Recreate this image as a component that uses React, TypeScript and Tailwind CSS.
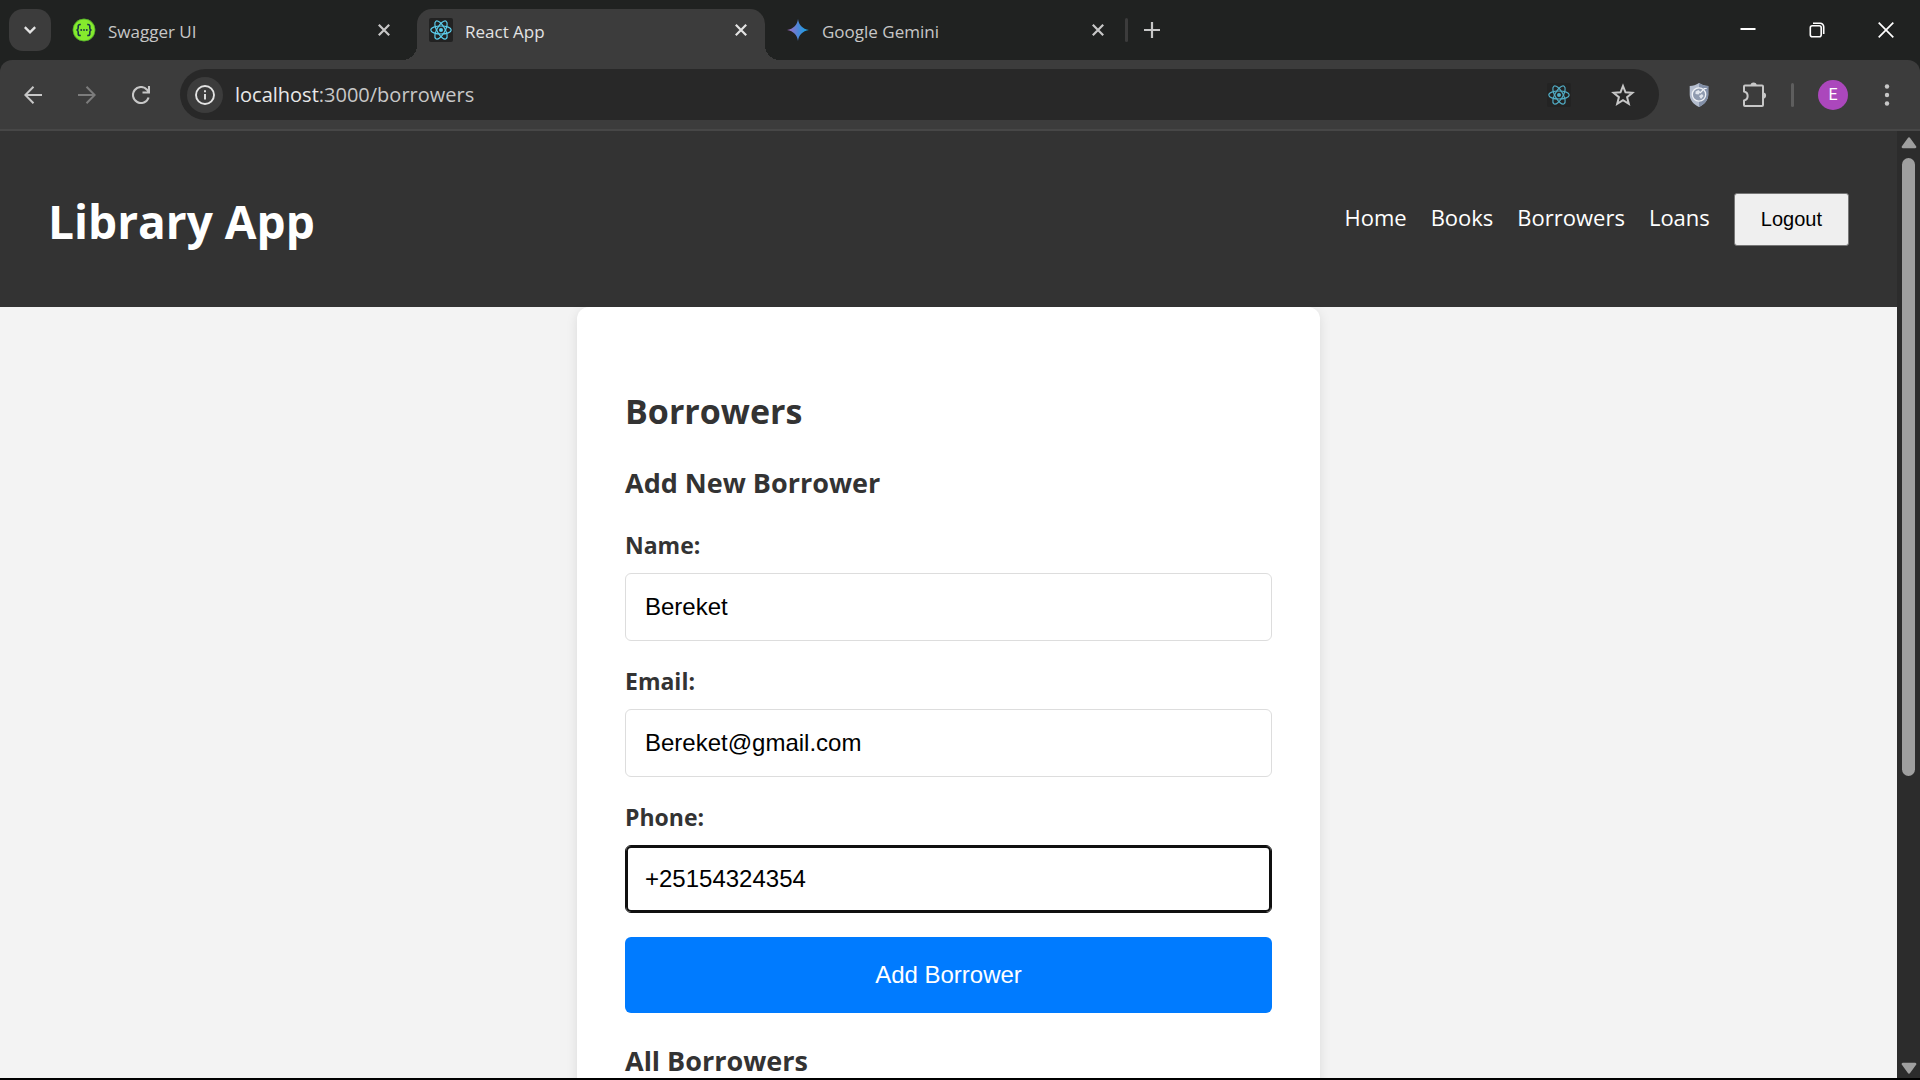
import { useState } from "react";
import type { ReactNode } from "react";

const UI = "font-['Segoe_UI','Open_Sans',sans-serif]";
const ARIAL = "font-['Liberation_Sans',Arial,sans-serif]";

function ReactLogo({ className }: { className: string }) {
  return (
    <svg className={className} viewBox="0 0 24 24" fill="none" aria-hidden="true">
      <rect width="24" height="24" rx="2" fill="#222222" />
      <g stroke="#5ccfee" strokeWidth="1.2">
        <ellipse cx="12" cy="12" rx="10.2" ry="4" />
        <ellipse cx="12" cy="12" rx="10.2" ry="4" transform="rotate(60 12 12)" />
        <ellipse cx="12" cy="12" rx="10.2" ry="4" transform="rotate(120 12 12)" />
      </g>
      <circle cx="12" cy="12" r="2" fill="#5ccfee" />
    </svg>
  );
}

function SwaggerLogo() {
  return (
    <svg className="size-6" viewBox="0 0 24 24" fill="none" aria-hidden="true">
      <circle cx="12" cy="12" r="11.2" fill="#85ea2d" />
      <circle cx="12" cy="12" r="11" stroke="#3d8f2c" strokeWidth="0.6" />
      <path
        d="M8.8 6.5H8c-1.3 0-1.8.7-1.8 1.8v1.6c0 1.3-.5 2-1.7 2.1 1.2.1 1.7.8 1.7 2.1v1.6c0 1.1.5 1.8 1.8 1.8h.8M15.200 6.500h.8c1.300 0 1.800.7 1.800 1.800v1.600c0 1.300.5 2 1.700 2.100-1.200.1-1.700.8-1.700 2.100v1.600c0 1.100-.5 1.800-1.800 1.800h-.8"
        stroke="#173647"
        strokeWidth="1.6"
      />
      <g fill="#173647">
        <circle cx="9.2" cy="12" r="0.9" />
        <circle cx="12" cy="12" r="0.9" />
        <circle cx="14.8" cy="12" r="0.9" />
      </g>
    </svg>
  );
}

function GeminiLogo() {
  return (
    <svg className="size-6" viewBox="0 0 24 24" aria-hidden="true">
      <defs>
        <linearGradient id="gemini" x1="0" y1="0" x2="1" y2="0">
          <stop offset="0.1" stopColor="#9a6fc4" />
          <stop offset="0.5" stopColor="#4d86d8" />
          <stop offset="0.9" stopColor="#1ba1e3" />
        </linearGradient>
      </defs>
      <path
        d="M12 1c.6 5.500 4.500 10.200 11 11-6.500.8-10.400 5.500-11 11-.6-5.500-4.500-10.200-11-11C7.500 11.200 11.400 6.500 12 1z"
        fill="url(#gemini)"
      />
    </svg>
  );
}

function CloseGlyph() {
  return (
    <svg className="size-3" viewBox="0 0 12 12" stroke="currentColor" strokeWidth="2.2" aria-hidden="true">
      <path d="M0.8 0.8 11.2 11.2M11.2 0.8 0.8 11.2" />
    </svg>
  );
}

function Tab({ icon, title, active = false }: { icon: ReactNode; title: string; active?: boolean }) {
  return (
    <div
      className={
        active
          ? "relative flex w-[348px] items-center gap-3 rounded-t-[15px] bg-[#3c3c3c] pl-3 pr-[18px] pb-[9px] text-[#e3e3e3]"
          : "flex w-[348px] items-center gap-3 pl-3 pr-[18px] pb-[9px] text-[#c7c7c7]"
      }
    >
      {active && (
        <>
          <span className="absolute bottom-0 -left-[15px] size-[15px] bg-[radial-gradient(circle_at_0_0,#202221_15px,#3c3c3c_15px)]" />
          <span className="absolute bottom-0 -right-[15px] size-[15px] bg-[radial-gradient(circle_at_100%_0,#202221_15px,#3c3c3c_15px)]" />
        </>
      )}
      {icon}
      <span className="flex-1 pt-[3px] text-[17px] leading-6">{title}</span>
      <button type="button" aria-label={`Close ${title}`}>
        <CloseGlyph />
      </button>
    </div>
  );
}

function TabStrip() {
  return (
    <div className="flex h-[60px] shrink-0 justify-between bg-[#202221] pt-[9px] pl-[9px]">
      <div className="flex gap-[9px]">
        <button
          type="button"
          aria-label="Search tabs"
          className="flex size-[42px] items-center justify-center rounded-[14px] bg-[#3c3c3c] text-[#e3e3e3]"
        >
          <svg className="size-3" viewBox="0 0 12 12" fill="none" stroke="currentColor" strokeWidth="2.4" aria-hidden="true">
            <path d="M0.8 3.2 6 8.4l5.2-5.2" />
          </svg>
        </button>
        <Tab icon={<SwaggerLogo />} title="Swagger UI" />
        <Tab icon={<ReactLogo className="size-6" />} title="React App" active />
        <Tab icon={<GeminiLogo />} title="Google Gemini" />
        <div className="-ml-1.5 flex h-[42px] items-center gap-4 text-[#c7c7c7]">
          <span className="h-6 w-[3px] rounded-full bg-[#3c3c3c]" />
          <button type="button" aria-label="New tab">
            <svg className="size-4" viewBox="0 0 16 16" stroke="currentColor" strokeWidth="2.2" aria-hidden="true">
              <path d="M8 0v16M0 8h16" />
            </svg>
          </button>
        </div>
      </div>
      <div className="flex h-[42px] text-white">
        <button type="button" aria-label="Minimize" className="flex w-[69px] items-center justify-center">
          <svg className="size-4" viewBox="0 0 16 16" stroke="currentColor" strokeWidth="2" aria-hidden="true">
            <path d="M0.5 7h15" />
          </svg>
        </button>
        <button type="button" aria-label="Restore" className="flex w-[69px] items-center justify-center">
          <svg className="size-4" viewBox="0 0 16 16" fill="none" stroke="currentColor" strokeWidth="1.6" aria-hidden="true">
            <rect x="1.3" y="3.8" width="10.900" height="10.900" rx="2" />
            <path d="M4 1.300h7.200a3.500 3.500 0 0 1 3.500 3.500V12" />
          </svg>
        </button>
        <button type="button" aria-label="Close window" className="flex w-[69px] items-center justify-center">
          <svg className="size-4" viewBox="0 0 16 16" stroke="currentColor" strokeWidth="1.7" aria-hidden="true">
            <path d="M0.7 0.7 15.3 15.3M15.3 0.7 0.7 15.3" />
          </svg>
        </button>
      </div>
    </div>
  );
}

function AddressBar() {
  return (
    <div className="flex h-[51px] flex-1 items-center rounded-full bg-[#282828] pr-6 pl-[7px]">
      <button
        type="button"
        aria-label="View site information"
        className="flex size-9 items-center justify-center rounded-full bg-[#3c3c3c] text-[#e3e3e3]"
      >
        <svg className="size-5" viewBox="0 0 20 20" fill="none" stroke="currentColor" strokeWidth="1.9" aria-hidden="true">
          <circle cx="10" cy="10" r="9" />
          <path d="M10 9v5.500M10 5.200v2" />
        </svg>
      </button>
      <div className="flex-1 pl-3 text-[20px] leading-7 text-[#c7c7c7]">
        <span className="text-[#e8e8e8]">localhost</span>:3000/borrowers
      </div>
      <ReactLogo className="size-6 opacity-80" />
      <button type="button" aria-label="Bookmark this tab" className="ml-10 text-[#c7c7c7]">
        <svg className="size-6" viewBox="0 0 24 24" fill="none" stroke="currentColor" strokeWidth="2" aria-hidden="true">
          <path d="M12 3l2.500 6.300 6.900.5-5.300 4.400 1.700 6.700-5.800-3.700-5.800 3.700 1.700-6.700-5.300-4.400 6.900-.5z" />
        </svg>
      </button>
    </div>
  );
}

function Toolbar() {
  return (
    <div className="shrink-0 bg-[#202221]">
      <div className="flex h-[71px] items-center rounded-t-[12px] border-b-2 border-[#474747] bg-[#3c3c3c] pl-6 text-[#c7c7c7]">
        <div className="flex w-[156px] gap-9">
          <button type="button" aria-label="Back">
            <svg className="size-[18px]" viewBox="0 0 18 18" fill="none" stroke="currentColor" strokeWidth="2" aria-hidden="true">
              <path d="M18 9H1.500M9.500 0.800 1.300 9l8.200 8.200" />
            </svg>
          </button>
          <button type="button" aria-label="Forward" className="text-[#7c7c7c]">
            <svg className="size-[18px]" viewBox="0 0 18 18" fill="none" stroke="currentColor" strokeWidth="2" aria-hidden="true">
              <path d="M0 9h16.500M8.500 0.800 16.700 9l-8.200 8.200" />
            </svg>
          </button>
          <button type="button" aria-label="Reload">
            <svg className="size-[18px]" viewBox="0 0 18 18" fill="none" stroke="currentColor" strokeWidth="2.1" aria-hidden="true">
              <path d="M16.600 11.500A8 8 0 1 1 15 3.700l1.500 1.900M17 0v6.500h-6.500" />
            </svg>
          </button>
        </div>
        <AddressBar />
        <div className="flex items-center pr-6 pl-7">
          <button type="button" aria-label="Privacy extension">
            <svg className="size-6" viewBox="0 0 24 24" fill="none" aria-hidden="true">
              <path d="M12 0c3 2 6 2.800 9.300 3v8.500c0 5.800-4 10-9.300 12.500-5.300-2.500-9.300-6.700-9.300-12.500V3C6 2.800 9 2 12 0z" fill="#b4bdce" />
              <path d="M12 0c3 2 6 2.800 9.300 3v8.500c0 5.800-4 10-9.300 12.500z" fill="#8390a8" />
              <circle cx="12" cy="11.5" r="6.7" fill="#8f9bb0" stroke="#eef1f6" strokeWidth="1.3" />
              <path d="M8.500 8.500l3-1.500 2 2-2 2.500-3-.5zM12 13l3-2 1.500 2-2.500 3z" fill="#dfe4ec" />
              <path d="M13 10l4.500-4.500M17.500 5.500h2.200" stroke="#eef1f6" strokeWidth="1.2" />
            </svg>
          </button>
          <button type="button" aria-label="Extensions" className="ml-[30px]">
            <svg className="size-[26px]" viewBox="0 0 26 26" fill="none" aria-hidden="true">
              <path
                d="M3 4.500a1 1 0 0 1 1-1h17a1 1 0 0 1 1 1V23a1 1 0 0 1-1 1H4a1 1 0 0 1-1-1v-4.600a4.600 4.600 0 0 0 0-9z"
                stroke="currentColor"
                strokeWidth="2"
                strokeLinejoin="round"
              />
              <path d="M9.500 3.500a3.100 3.100 0 0 1 6.200 0zM22 10.500a3.100 3.100 0 0 1 0 6.200z" fill="currentColor" />
            </svg>
          </button>
          <span className="ml-6 h-6 w-[3px] rounded-full bg-[#5e5e5e]" />
          <button
            type="button"
            aria-label="Profile"
            className="ml-6 flex size-[30px] items-center justify-center rounded-full bg-[#ab47bc] font-[Roboto,sans-serif] text-[16px] leading-none text-white"
          >
            E
          </button>
          <button type="button" aria-label="Menu" className="ml-[30px]">
            <svg className="h-6 w-[18px]" viewBox="0 0 18 24" fill="currentColor" aria-hidden="true">
              <circle cx="9" cy="3.5" r="2.2" />
              <circle cx="9" cy="12" r="2.2" />
              <circle cx="9" cy="20.5" r="2.2" />
            </svg>
          </button>
        </div>
      </div>
    </div>
  );
}

function SiteHeader() {
  return (
    <header className="flex h-44 shrink-0 items-center justify-between bg-[#333333] px-12 text-white">
      <h1 className="pt-1 text-[46px] leading-[64px] font-bold">Library App</h1>
      <nav className="flex items-center gap-6 text-[22px] leading-8">
        <div className="flex gap-6 pb-1">
          <a href="#home">Home</a>
          <a href="#books">Books</a>
          <a href="#borrowers">Borrowers</a>
          <a href="#loans">Loans</a>
        </div>
        <button
          type="button"
          className={`h-[53px] rounded-[3px] border border-[#767676] bg-[#efefef] px-[26px] text-[20px] leading-6 text-black ${ARIAL}`}
        >
          Logout
        </button>
      </nav>
    </header>
  );
}

function Field({
  id,
  label,
  type,
  initial,
  focused = false,
}: {
  id: string;
  label: string;
  type: string;
  initial: string;
  focused?: boolean;
}) {
  const [value, setValue] = useState(initial);
  return (
    <div className="flex flex-col gap-3">
      <label htmlFor={id} className="text-[23px] leading-8 font-bold">
        {label}
      </label>
      <input
        id={id}
        type={type}
        value={value}
        onChange={(event) => setValue(event.target.value)}
        className={
          focused
            ? `h-[68px] w-full rounded-[6px] border border-[#101010] bg-white px-[19px] text-[24px] text-black ring-2 ring-[#101010] ring-inset outline-none ${ARIAL}`
            : `h-[68px] w-full rounded-[6px] border border-[#dddddd] bg-white px-[19px] text-[24px] text-black outline-none ${ARIAL}`
        }
      />
    </div>
  );
}

function BorrowersCard() {
  return (
    <main className="mx-auto w-full max-w-[743px] shrink-0 rounded-[12px] bg-white px-12 pt-20 pb-12 text-[#333333] shadow-[0_3px_12px_rgba(0,0,0,0.1)]">
      <h2 className="text-[34px] leading-[48px] font-bold">Borrowers</h2>
      <h3 className="mt-7 text-[27px] leading-10 font-bold">Add New Borrower</h3>
      <form className="mt-[26px] flex flex-col gap-6" onSubmit={(event) => event.preventDefault()}>
        <Field id="name" label="Name:" type="text" initial="Bereket" />
        <Field id="email" label="Email:" type="email" initial="Bereket@gmail.com" />
        <Field id="phone" label="Phone:" type="text" initial="+25154324354" focused />
        <button type="submit" className={`h-[76px] rounded-[6px] bg-[#007bff] text-[24px] text-white ${ARIAL}`}>
          Add Borrower
        </button>
      </form>
      <h3 className="mt-7 text-[27px] leading-10 font-bold">All Borrowers</h3>
    </main>
  );
}

function ScrollTrack() {
  return (
    <div className="flex w-[23px] shrink-0 flex-col items-center bg-[#2c2c2c] pt-1.5 pb-1 text-[#9f9f9f]">
      <svg className="h-3 w-4" viewBox="0 0 16 12" fill="currentColor" aria-hidden="true">
        <path d="M6.700 1.200a1.600 1.600 0 0 1 2.600 0l5.800 8a1.300 1.300 0 0 1-1.100 2.100H2a1.300 1.300 0 0 1-1.100-2.100z" />
      </svg>
      <div className="flex min-h-0 w-full flex-1 flex-col items-center py-[9px]">
        <div className="h-[69%] w-[13px] rounded-full bg-[#9f9f9f]" />
      </div>
      <svg className="h-3 w-4" viewBox="0 0 16 12" fill="currentColor" aria-hidden="true">
        <path d="M9.300 10.800a1.600 1.600 0 0 1-2.600 0l-5.800-8A1.300 1.300 0 0 1 2 .7h12a1.300 1.300 0 0 1 1.100 2.100z" />
      </svg>
    </div>
  );
}

export default function App() {
  return (
    <div className={`flex h-screen flex-col overflow-hidden border-b-2 border-black bg-[#f3f3f3] ${UI}`}>
      <TabStrip />
      <Toolbar />
      <div className="flex min-h-0 flex-1">
        <div className="flex min-w-0 flex-1 flex-col overflow-hidden">
          <SiteHeader />
          <BorrowersCard />
        </div>
        <ScrollTrack />
      </div>
    </div>
  );
}
